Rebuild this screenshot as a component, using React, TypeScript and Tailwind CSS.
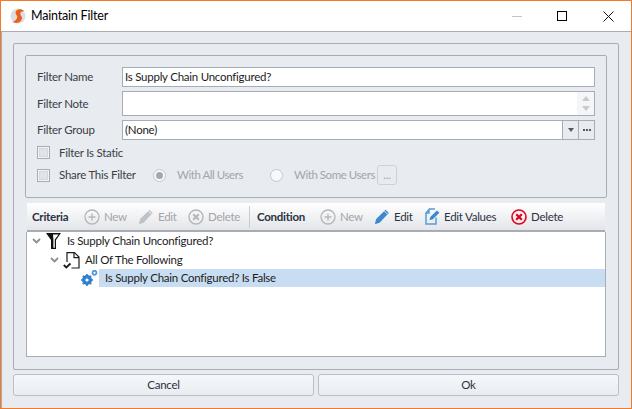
import React from "react";

const Check = ({ className = "" }: { className?: string }) => (
  <span className={`flex w-[13px] h-[13px] border border-[#a8adb5] bg-[#f4f5f7] items-center justify-center ${className}`}>
    <span className="w-[9px] h-[9px] bg-[#e3e4e6] border border-[#d4d6d9]" />
  </span>
);

const Radio = ({ on }: { on?: boolean }) => (
  <span className="flex w-[13px] h-[13px] rounded-full border border-[#c4c7cc] bg-[#f8f9fa] items-center justify-center">
    {on && <span className="w-[7px] h-[7px] rounded-full bg-[#a6a8ab]" />}
  </span>
);

const Plus = () => (
  <svg width="16" height="16" viewBox="0 0 16 16" fill="none" stroke="#b4b6b9" strokeWidth="1.3">
    <circle cx="8" cy="8" r="7" />
    <path d="M8 4.5v7M4.5 8h7" />
  </svg>
);
const Pencil = ({ color }: { color: string }) => (
  <svg width="16" height="17" viewBox="0 0 16 17">
    <path d="M1 16l1.2-5L11.500 1.800l3.300 3.300L5.600 14.800z" fill={color} />
    <path d="M10.400 3l3.300 3.300" stroke="#fff" strokeWidth="0.8" />
    <path d="M1 16l1.200-4 2.800 2.800z" fill={color} opacity="0.6" />
  </svg>
);
const XGray = () => (
  <svg width="16" height="16" viewBox="0 0 16 16" fill="none" stroke="#b4b6b9">
    <circle cx="8" cy="8" r="7" strokeWidth="1.4" />
    <path d="M5.200 5.200l5.600 5.600M10.800 5.200l-5.600 5.600" strokeWidth="2" />
  </svg>
);
const XRed = () => (
  <svg width="16" height="16" viewBox="0 0 16 16" fill="none" stroke="#e3001b">
    <circle cx="8" cy="8" r="7" strokeWidth="1.6" />
    <path d="M5.200 5.200l5.600 5.600M10.800 5.200l-5.600 5.600" strokeWidth="2.2" />
  </svg>
);
const EditValues = () => (
  <svg width="15" height="17" viewBox="0 0 15 17" fill="none">
    <path d="M4 1h6M1 5L4 1.500V5zM1 5v11h10V9.500" stroke="#5b9bd5" strokeWidth="1.5" />
    <path d="M4.500 12l.8-3L12 2.400l2.400 2.400L7.500 11.400z" fill="#3f87cc" />
  </svg>
);
const Chevron = () => (
  <svg width="9" height="6" viewBox="0 0 9 6" fill="none" stroke="#8a8f96" strokeWidth="1.8">
    <path d="M1 1l3.500 3.500L8 1" />
  </svg>
);
const Funnel = () => (
  <svg width="15" height="16" viewBox="0 0 15 16">
    <path d="M0 0h15L10 7V16H5V7z" fill="#111" />
    <path d="M7 1.400h5.600L8.800 6.500V14.800H7.400V6.500z" fill="#fff" />
  </svg>
);
const Doc = () => (
  <svg width="17" height="17" viewBox="0 0 17 17" fill="none" stroke="#1c1c1c" strokeWidth="1.2">
    <path d="M4 10V.6h7.500L16 5.100V16H8.500" />
    <path d="M11 .6v5h5" />
    <path d="M.8 13l2.500 2.500L7.500 11.500" strokeWidth="1.8" />
  </svg>
);
const Gears = () => (
  <svg width="17" height="16" viewBox="0 0 17 16">
    <circle cx="6" cy="10" r="3.700" fill="none" stroke="#2f7fd0" strokeWidth="2.600" />
    <path d="M6 4v12M0 10h12M1.800 5.800l8.400 8.400M10.200 5.800l-8.400 8.400" stroke="#2f7fd0" strokeWidth="1.600" />
    <circle cx="6" cy="10" r="1.600" fill="#fff" />
    <circle cx="13.500" cy="2.800" r="2" fill="none" stroke="#4f9ae0" strokeWidth="1.800" />
  </svg>
);

const Tool = ({ icon, label, on, w }: { icon: React.ReactNode; label: string; on?: boolean; w: string }) => (
  <span className={`flex items-center gap-[4px] ${w} ${on ? "text-[#2b3340]" : "text-[#a3a5a8]"}`}>
    {icon}
    <span className="whitespace-nowrap">{label}</span>
  </span>
);

export default function App() {
  return (
    <div className="w-[632px] h-[409px] bg-white border border-[#f47a26] flex flex-col overflow-hidden text-[11.5px] tracking-[-0.25px] leading-[16px] font-['Lato','Noto_Sans',sans-serif] text-[#3a3f47]">
      <div className="h-[30px] flex items-center shrink-0 bg-white">
        <svg className="ml-[9px]" width="16" height="16" viewBox="0 0 16 16">
          <circle cx="8" cy="8" r="7.500" fill="#dedede" />
          <path d="M2.500 14c5 2 8.500.500 9.500-3.500.5-2.300-2-3-1.700-5 .2-1.400 1.800-2.400 4-2.500C11 .500 6.500.800 5.700 4c-.6 2.400 1.800 3.300 1.500 5.200-.3 1.900-2 3.800-4.700 4.800z" fill="#e8601c" />
        </svg>
        <span className="ml-[5px] text-[12.5px] tracking-[-0.2px] text-black">Maintain Filter</span>
        <div className="ml-auto flex items-center">
          <span className="w-[10px] h-px bg-[#c4c4c4] mr-[35px]" />
          <span className="w-[10px] h-[10px] border border-black mr-[36px]" />
          <svg className="mr-[17px]" width="11" height="11" viewBox="0 0 11 11" stroke="#111" fill="none">
            <path d="M.5.500l10 10M10.500.500l-10 10" />
          </svg>
        </div>
      </div>
      <div className="flex-1 bg-[#e8ebf0] border-t border-l border-[#a8adb5] pt-[11px] pl-[11px] pr-[11px] flex flex-col min-h-0">
        <div className="w-[606px] h-[327px] border border-[#a8adb5] rounded-[2px] px-[11px] pt-[11px] flex flex-col shrink-0">
          <div className="h-[143px] border border-[#a8adb5] rounded-[2px] px-[11px] pt-[11px] shrink-0 flex flex-col">
            <div className="flex items-center h-[20px]">
              <span className="w-[85px] shrink-0">Filter Name</span>
              <div className="flex-1 h-[20px] bg-white border border-[#a8adb5] flex items-center pl-[2px] text-[#1c1c1c]">Is Supply Chain Unconfigured?</div>
            </div>
            <div className="flex items-center h-[25px] mt-[4px]">
              <span className="w-[85px] shrink-0">Filter Note</span>
              <div className="flex-1 h-[25px] bg-white border border-[#a8adb5] flex justify-end">
                <div className="w-[17px] bg-[#f5f6f7] flex flex-col items-center justify-center gap-[5px]">
                  <span className="w-0 h-0 border-x-[4px] border-x-transparent border-b-[5px] border-b-[#c8cacd]" />
                  <span className="w-0 h-0 border-x-[4px] border-x-transparent border-t-[5px] border-t-[#c8cacd]" />
                </div>
              </div>
            </div>
            <div className="flex items-center h-[20px] mt-[4px]">
              <span className="w-[85px] shrink-0">Filter Group</span>
              <div className="flex-1 h-[20px] bg-white border border-[#a8adb5] flex items-center pl-[2px] text-[#1c1c1c]">
                <span>(None)</span>
                <div className="ml-auto h-full w-[16px] border-l border-[#a8adb5] bg-[#e8ebf0] flex items-center justify-center">
                  <span className="w-0 h-0 border-x-[3.5px] border-x-transparent border-t-[4px] border-t-[#555a62]" />
                </div>
                <div className="h-full w-[16px] border-l border-[#a8adb5] bg-[#e8ebf0] flex items-center justify-center gap-px">
                  <span className="w-[2px] h-[2px] bg-[#555a62]" />
                  <span className="w-[2px] h-[2px] bg-[#555a62]" />
                  <span className="w-[2px] h-[2px] bg-[#555a62]" />
                </div>
              </div>
            </div>
            <div className="flex items-center h-[13px] mt-[6px]">
              <Check />
              <span className="ml-[9px]">Filter Is Static</span>
            </div>
            <div className="flex items-center h-[20px] mt-[6px]">
              <Check />
              <span className="ml-[9px] w-[94px] whitespace-nowrap">Share This Filter</span>
              <Radio on />
              <span className="ml-[11px] w-[93px] text-[#a3a5a8] whitespace-nowrap tracking-[-0.45px]">With All Users</span>
              <Radio />
              <span className="ml-[11px] w-[83px] text-[#a3a5a8] whitespace-nowrap tracking-[-0.45px]">With Some Users</span>
              <span className="w-[20px] h-[20px] border border-[#cdd0d4] rounded-[3px] flex items-center justify-center text-[#a3a5a8]">...</span>
            </div>
          </div>
          <div className="mt-[5px] mx-[2px] h-[29px] shrink-0 bg-gradient-to-b from-white to-[#e3e5e9] border-b-2 border-[#a8adb5] flex items-center pl-[5px]">
            <span className="font-bold text-[#2b3340] w-[52px]">Criteria</span>
            <Tool icon={<Plus />} label="New" w="w-[54px]" />
            <Tool icon={<Pencil color="#c0c2c5" />} label="Edit" w="w-[50px]" />
            <Tool icon={<XGray />} label="Delete" w="w-[61px]" />
            <span className="w-px h-[22px] bg-[#c9ccd1]" />
            <span className="font-bold text-[#2b3340] ml-[7px] w-[63px]">Condition</span>
            <Tool icon={<Plus />} label="New" w="w-[54px]" />
            <Tool icon={<Pencil color="#3f87cc" />} label="Edit" on w="w-[51px]" />
            <Tool icon={<EditValues />} label="Edit Values" on w="w-[86px]" />
            <Tool icon={<XRed />} label="Delete" on w="w-[60px]" />
          </div>
          <div className="mx-px h-[125px] shrink-0 bg-white border border-t-0 border-[#a8adb5] text-[#1c1c1c] flex flex-col">
            <div className="flex items-center h-[18px]">
              <span className="ml-[5px] w-[14px]"><Chevron /></span>
              <Funnel />
              <span className="ml-[6px]">Is Supply Chain Unconfigured?</span>
            </div>
            <div className="flex items-center h-[18px] mt-px">
              <span className="ml-[23px] w-[13px]"><Chevron /></span>
              <Doc />
              <span className="ml-[5px]">All Of The Following</span>
            </div>
            <div className="flex items-center h-[18px]">
              <span className="ml-[54px]"><Gears /></span>
              <span className="ml-[1px] flex-1 h-[18px] bg-[#c8ddf2] pl-[6px] flex items-center">Is Supply Chain Configured? Is False</span>
            </div>
          </div>
        </div>
        <div className="w-[606px] mt-[4px] flex gap-[4px] h-[22px] shrink-0">
          <button className="flex-1 rounded-[3px] border border-[#bcc0c6] bg-gradient-to-b from-[#f5f8fb] to-[#e9ecf0] text-[#2b3340]">Cancel</button>
          <button className="flex-1 rounded-[3px] border border-[#bcc0c6] bg-gradient-to-b from-[#f5f8fb] to-[#e9ecf0] text-[#2b3340]">Ok</button>
        </div>
      </div>
    </div>
  );
}
